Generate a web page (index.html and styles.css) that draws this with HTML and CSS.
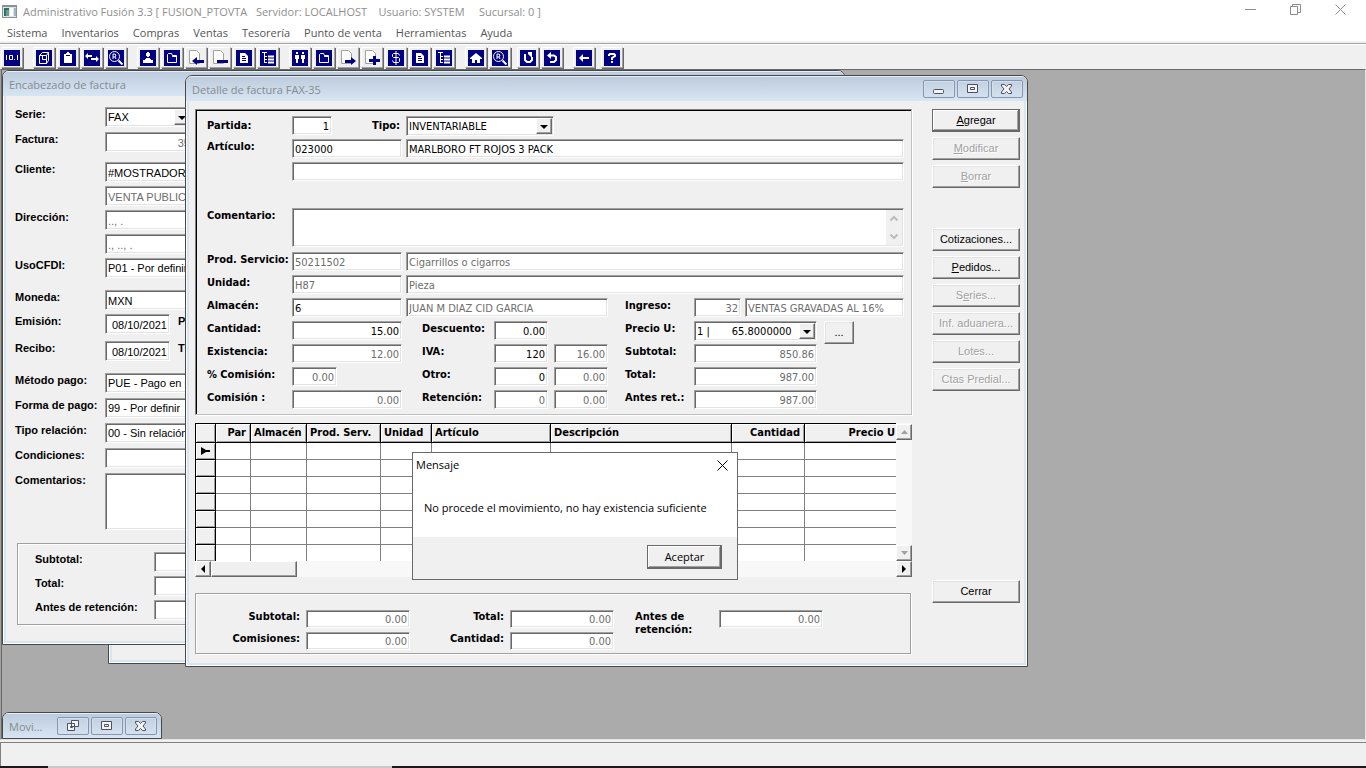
FILE: index.html
```html
<!DOCTYPE html>
<html lang="es">
<head>
    <meta charset="UTF-8">
    <meta name="viewport" content="width=device-width, initial-scale=1.0">
    <title>Administrativo Fusión 3.3</title>
    <link rel="stylesheet" href="styles.css">
</head>
<body>
    <!-- Barra de título -->
    <header class="titlebar">
        <svg class="app-icon" width="15" height="13" viewBox="0 0 15 13"><path fill="#8a9396" d="M0 0h15v13H0z"/><path fill="#dfe5e6" d="M1 2h13v10H1z"/><path fill="#2f6f70" d="M2 3h5v8H2z"/><path fill="#6aa384" d="M4 5h3v6H4z"/><path fill="#fff" d="M8 3h3v8H8z"/><path fill="#9fb4c8" d="M12 3h2v8h-2z"/></svg>
        <h1 class="app-title">Administrativo Fusión 3.3 [ FUSION_PTOVTA &nbsp; Servidor: LOCALHOST &nbsp;&nbsp; Usuario: SYSTEM &nbsp; &nbsp; Sucursal: 0 ]</h1>
        <div class="app-controls">
            <button aria-label="Minimizar"><svg width="11" height="11" viewBox="0 0 11 11"><path d="M0 5.500h11"/></svg></button>
            <button aria-label="Restaurar"><svg width="11" height="11" viewBox="0 0 11 11"><path d="M.5 2.500h7v8h-7zM2.500 2.500v-2h8v8h-3"/></svg></button>
            <button aria-label="Cerrar"><svg width="11" height="11" viewBox="0 0 11 11"><path d="M.5.5l10 10M10.500.5l-10 10"/></svg></button>
        </div>
    </header>

    <nav class="menu">
        <a href="#">Sistema</a>
        <a href="#">Inventarios</a>
        <a href="#">Compras</a>
        <a href="#">Ventas</a>
        <a href="#">Tesorería</a>
        <a href="#">Punto de venta</a>
        <a href="#">Herramientas</a>
        <a href="#">Ayuda</a>
    </nav>

    <!-- Barra de herramientas -->
    <div class="toolbar">
        <div class="tools">
            <button class="tool" aria-label="Numeración"><svg viewBox="0 0 16 16"><path class="w" d="M2.500 5v5M5.500 5.500h3v4h-3zM10.500 9v1M13.500 5v5"/></svg></button>
        </div>
        <div class="tools">
            <button class="tool" aria-label="Artículos"><svg viewBox="0 0 16 16"><path class="w" d="M3.500 5.500h7v8h-7zM3.500 5.500l3-3h6v8l-2 3M10.500 5.500l2-3M6.500 5.500v4h4"/></svg></button>
            <button class="tool" aria-label="Inventario"><svg viewBox="0 0 16 16"><path class="f" d="M4 4h2V3h1V2h2v1h1v1h2v9H4z"/><path class="n" d="M6 5h4v1H6z"/></svg></button>
            <button class="tool" aria-label="Movimientos"><svg viewBox="0 0 16 16"><path class="f" d="M1 6l3-3v2h4v2H4v2zM15 9l-3-3v2H7v2h5v2z"/></svg></button>
            <button class="tool" aria-label="Consulta"><svg viewBox="0 0 16 16"><circle class="w" cx="6.500" cy="6.500" r="5"/><path class="w" d="M5 9V4h2l1 1-1 2H5M7 7l1 2"/><path class="w2" d="M10.500 10.500l4 4"/></svg></button>
        </div>
        <div class="tools">
            <button class="tool" aria-label="Proveedores"><svg viewBox="0 0 16 16"><path class="f" d="M7 2h2v1h1v3H9v1H7V6H6V3h1zM6 8h4v1h1v1h2v3H3v-3h2V9h1z"/></svg></button>
            <button class="tool" aria-label="Abrir compras"><svg viewBox="0 0 16 16"><path class="w" d="M3.500 12.500v-8l1-1h3l1 2h4v7zM8.500 5.500v1h4"/></svg></button>
            <button class="tool plain" aria-label="Entrada"><svg viewBox="0 0 16 16"><path class="page" d="M1.500.5h7l3 3v10h-10z"/><path class="n" d="M4 11l5-4v3h7v3H9v2z"/></svg></button>
            <button class="tool plain" aria-label="Quitar"><svg viewBox="0 0 16 16"><path class="page" d="M1.500.5h7l3 3v10h-10z"/><path class="n" d="M5 10h11v3H5z"/></svg></button>
            <button class="tool" aria-label="Documento de compra"><svg viewBox="0 0 16 16"><path class="f" d="M4 3h5l3 3v7H4z"/><path class="b" d="M6 6.500h3M6 8.500h4M6 10.500h4"/></svg></button>
            <button class="tool" aria-label="Árbol de compras"><svg viewBox="0 0 16 16"><path class="w" d="M2 2.500h5M4.500 3v10M5 6.500h2M5 9.500h2M5 12.500h2"/><path class="w2" d="M8 6.500h6M8 9.500h6M8 12.500h6"/></svg></button>
        </div>
        <div class="tools">
            <button class="tool" aria-label="Clientes"><svg viewBox="0 0 16 16"><path class="f" d="M4 2h2v2H4zM3 5h4v4H6v4H4V9H3zM10 2h2v2h-2zM9 5h4v4h-1v4h-2V9H9z"/></svg></button>
            <button class="tool" aria-label="Abrir ventas"><svg viewBox="0 0 16 16"><path class="w" d="M3.500 12.500v-8l1-1h3l1 2h4v7zM8.500 5.500v1h4"/></svg></button>
            <button class="tool plain" aria-label="Salida"><svg viewBox="0 0 16 16"><path class="page" d="M1.500.5h7l3 3v10h-10z"/><path class="n" d="M16 11l-5-4v3H5v3h6v2z"/></svg></button>
            <button class="tool plain" aria-label="Agregar documento"><svg viewBox="0 0 16 16"><path class="page" d="M1.500.5h7l3 3v10h-10z"/><path class="n" d="M9 6h3v3h4v3h-4v3H9v-3H5V9h4z"/></svg></button>
            <button class="tool" aria-label="Pagos"><svg viewBox="0 0 16 16"><path class="w" d="M11.500 5.500l-1-2h-5l-1 1v2l1 1h5l1 1v3l-1 1h-5l-1-2M8 1v14"/></svg></button>
            <button class="tool" aria-label="Documento de venta"><svg viewBox="0 0 16 16"><path class="f" d="M4 3h5l3 3v7H4z"/><path class="b" d="M6 6.500h3M6 8.500h4M6 10.500h4"/></svg></button>
            <button class="tool" aria-label="Árbol de ventas"><svg viewBox="0 0 16 16"><path class="w" d="M2 2.500h5M4.500 3v10M5 6.500h2M5 9.500h2M5 12.500h2"/><path class="w2" d="M8 6.500h6M8 9.500h6M8 12.500h6"/></svg></button>
        </div>
        <div class="tools">
            <button class="tool" aria-label="Inicio"><svg viewBox="0 0 16 16"><path class="f" d="M8 3l6 5v1h-2v4H9v-3H7v3H4V9H2V8z"/></svg></button>
            <button class="tool" aria-label="Buscar"><svg viewBox="0 0 16 16"><circle class="w" cx="6.500" cy="6.500" r="5"/><path class="w" d="M5 9V4h2l1 1-1 2H5M7 7l1 2"/><path class="w2" d="M10.500 10.500l4 4"/></svg></button>
        </div>
        <div class="tools close">
            <button class="tool" aria-label="Actualizar"><svg viewBox="0 0 16 16"><path class="w2" d="M6 5H5v5l2 2h3l2-2V7"/><path class="f" d="M8 2h4v5h-1L8 4z"/></svg></button>
            <button class="tool" aria-label="Deshacer"><svg viewBox="0 0 16 16"><path class="w2" d="M6 5.500h4l2 1.500v3l-2 2H6"/><path class="f" d="M7 2v7L3 5.500z"/></svg></button>
        </div>
        <div class="tools">
            <button class="tool" aria-label="Salir"><svg viewBox="0 0 16 16"><path class="f" d="M3 8l4-4v3h6v2H7v3z"/></svg></button>
        </div>
        <div class="tools close">
            <button class="tool" aria-label="Ayuda"><svg viewBox="0 0 16 16"><path class="w2" d="M5 6V5l1-1h4l1 1v1L8 8v2M8 11v2"/></svg></button>
        </div>
    </div>

    <!-- Escritorio MDI -->
    <main class="desktop">
        <section class="window win-header">
            <h2 class="win-title">Encabezado de factura</h2>
            <div class="win-body header-form">
                <div class="group">
                    <div class="row"><label for="serie">Serie:</label><span class="combo serie"><select id="serie"><option>FAX</option></select><i></i></span></div>
                    <div class="row"><label for="factura">Factura:</label><input id="factura" class="factura off" value="35"></div>
                </div>
                <div class="group tight">
                    <div class="row"><label for="cliente">Cliente:</label><input id="cliente" value="#MOSTRADOR"></div>
                    <div class="row"><label for="nombre"></label><input id="nombre" class="off" value="VENTA PUBLICO"></div>
                    <div class="row"><label for="dir1">Dirección:</label><input id="dir1" class="off" value=".., ."></div>
                    <div class="row"><label for="dir2"></label><input id="dir2" class="off" value="., .., ."></div>
                    <div class="row"><label for="uso">UsoCFDI:</label><span class="combo"><select id="uso"><option>P01 - Por definir</option></select><i></i></span></div>
                </div>
                <div class="group tight">
                    <div class="row"><label for="moneda">Moneda:</label><input id="moneda" value="MXN"></div>
                    <div class="row"><label for="emision">Emisión:</label><input id="emision" class="date" value="08/10/2021"><label class="next" for="plazo">Plazo:</label><input id="plazo"></div>
                    <div class="row recibo"><label for="recibo">Recibo:</label><input id="recibo" class="date" value="08/10/2021"><label class="next" for="tc">TC:</label><input id="tc"></div>
                </div>
                <div class="group">
                    <div class="row"><label for="metodo">Método pago:</label><span class="combo"><select id="metodo"><option>PUE - Pago en una exhibición</option></select><i></i></span></div>
                    <div class="row"><label for="forma">Forma de pago:</label><span class="combo"><select id="forma"><option>99 - Por definir</option></select><i></i></span></div>
                    <div class="row"><label for="relacion">Tipo relación:</label><span class="combo"><select id="relacion"><option>00 - Sin relación</option></select><i></i></span></div>
                    <div class="row"><label for="cond">Condiciones:</label><input id="cond"></div>
                    <div class="row"><label for="coments">Comentarios:</label><textarea id="coments"></textarea></div>
                </div>
                <div class="etched header-totals">
                    <div class="row"><label for="hsub">Subtotal:</label><input id="hsub"></div>
                    <div class="row"><label for="htot">Total:</label><input id="htot"></div>
                    <div class="row"><label for="hret">Antes de retención:</label><input id="hret"></div>
                </div>
            </div>
        </section>

        <section class="window win-back"></section>

        <section class="window win-detail">
            <div class="win-top">
                <h2 class="win-title">Detalle de factura FAX-35</h2>
                <div class="win-controls">
                    <button aria-label="Minimizar"><svg width="14" height="12" viewBox="0 0 14 12"><rect x="1.500" y="6.500" width="10" height="4" rx="1"/></svg></button>
                    <button aria-label="Maximizar"><svg width="14" height="12" viewBox="0 0 14 12"><path d="M1.500 1.500h10v8h-10zM4.500 4.500h4v2h-4z"/></svg></button>
                    <button aria-label="Cerrar"><svg width="14" height="12" viewBox="0 0 14 12"><path d="M1.500 1.500h3L6.500 3.500l2-2h3v1.500l-2.500 3 2.500 3v1.500h-3l-2-2-2 2h-3V9L4 6 1.500 3z"/></svg></button>
                </div>
            </div>
            <div class="win-body detail">
                <div class="detail-main">
                    <form class="sunken">
                        <div class="line first">
                            <label class="l1" for="partida">Partida:</label><input id="partida" class="w40 num" value="1">
                            <label class="tipo" for="tipo">Tipo:</label><span class="combo w148"><select id="tipo"><option>INVENTARIABLE</option></select><i></i></span>
                        </div>
                        <div class="line">
                            <label class="l1" for="articulo">Artículo:</label><input id="articulo" class="w110" value="023000">
                            <input class="grow" aria-label="Nombre del artículo" value="MARLBORO FT ROJOS 3 PACK">
                        </div>
                        <div class="line">
                            <label class="l1" for="extra"></label><input id="extra" class="grow">
                        </div>
                        <div class="line comment">
                            <label class="l1" for="comentario">Comentario:</label>
                            <div class="memo grow">
                                <textarea id="comentario"></textarea>
                                <div class="memo-scroll">
                                    <svg width="10" height="7" viewBox="0 0 10 7"><path d="M1.500 5.500L5 2l3.500 3.500"/></svg>
                                    <svg width="10" height="7" viewBox="0 0 10 7"><path d="M1.500 1.500L5 5l3.500-3.500"/></svg>
                                </div>
                            </div>
                        </div>
                        <div class="line">
                            <label class="l1" for="prod">Prod. Servicio:</label><input id="prod" class="w110 off" value="50211502">
                            <input class="grow off" aria-label="Descripción del servicio" value="Cigarrillos o cigarros">
                        </div>
                        <div class="line">
                            <label class="l1" for="unidad">Unidad:</label><input id="unidad" class="w110 off" value="H87">
                            <input class="grow off" aria-label="Nombre de la unidad" value="Pieza">
                        </div>
                        <div class="line">
                            <label class="l1" for="almacen">Almacén:</label><input id="almacen" class="w110" value="6">
                            <input class="w202 off" aria-label="Nombre del almacén" value="JUAN M DIAZ CID GARCIA">
                            <label class="l3" for="ingreso">Ingreso:</label><input id="ingreso" class="w47 num off" value="32">
                            <input class="grow off" aria-label="Tipo de ingreso" value="VENTAS GRAVADAS AL 16%">
                        </div>
                        <div class="line">
                            <label class="l1" for="cantidad">Cantidad:</label><input id="cantidad" class="w110 num" value="15.00">
                            <label class="l2" for="descuento">Descuento:</label><input id="descuento" class="w54 num" value="0.00">
                            <span class="w54 second"></span>
                            <label class="l3" for="precio">Precio U:</label><span class="combo w123"><select id="precio"><option>1 | &nbsp; &nbsp; &nbsp; 65.8000000</option></select><i></i></span>
                            <button type="button" class="btn dots">...</button>
                        </div>
                        <div class="line">
                            <label class="l1" for="existencia">Existencia:</label><input id="existencia" class="w110 num off" value="12.00">
                            <label class="l2" for="iva">IVA:</label><input id="iva" class="w54 num" value="120">
                            <input class="w54 second num off" aria-label="IVA %" value="16.00">
                            <label class="l3" for="subtotal">Subtotal:</label><input id="subtotal" class="w123 num off" value="850.86">
                        </div>
                        <div class="line">
                            <label class="l1" for="pcom">% Comisión:</label><span class="w110"><input id="pcom" class="w45 num off" value="0.00"></span>
                            <label class="l2" for="otro">Otro:</label><input id="otro" class="w54 num" value="0">
                            <input class="w54 second num off" aria-label="Otro %" value="0.00">
                            <label class="l3" for="total">Total:</label><input id="total" class="w123 num off" value="987.00">
                        </div>
                        <div class="line">
                            <label class="l1" for="comision">Comisión :</label><input id="comision" class="w110 num off" value="0.00">
                            <label class="l2" for="ret">Retención:</label><input id="ret" class="w54 num off" value="0">
                            <input class="w54 second num off" aria-label="Retención %" value="0.00">
                            <label class="l3" for="antes">Antes ret.:</label><input id="antes" class="w123 num off" value="987.00">
                        </div>
                    </form>

                    <!-- Rejilla de partidas -->
                    <div class="grid">
                        <div class="grid-view">
                            <table>
                                <colgroup><col class="c-sel"><col class="c-par"><col class="c-alm"><col class="c-prod"><col class="c-uni"><col class="c-art"><col class="c-desc"><col class="c-cant"><col class="c-precio"></colgroup>
                                <thead>
                                    <tr><th></th><th class="r">Par</th><th>Almacén</th><th>Prod. Serv.</th><th>Unidad</th><th>Artículo</th><th>Descripción</th><th class="r">Cantidad</th><th class="r">Precio U</th></tr>
                                </thead>
                                <tbody>
                                    <tr><th><svg width="9" height="8" viewBox="0 0 9 8"><path d="M0 0l5 3h4v2H5L0 8z"/></svg></th><td></td><td></td><td></td><td></td><td></td><td></td><td></td><td></td></tr>
                                    <tr><th></th><td></td><td></td><td></td><td></td><td></td><td></td><td></td><td></td></tr>
                                    <tr><th></th><td></td><td></td><td></td><td></td><td></td><td></td><td></td><td></td></tr>
                                    <tr><th></th><td></td><td></td><td></td><td></td><td></td><td></td><td></td><td></td></tr>
                                    <tr><th></th><td></td><td></td><td></td><td></td><td></td><td></td><td></td><td></td></tr>
                                    <tr><th></th><td></td><td></td><td></td><td></td><td></td><td></td><td></td><td></td></tr>
                                    <tr><th></th><td></td><td></td><td></td><td></td><td></td><td></td><td></td><td></td></tr>
                                </tbody>
                            </table>
                        </div>
                        <div class="vscroll">
                            <button class="sb" aria-label="Subir"><svg width="7" height="4" viewBox="0 0 7 4"><path fill="#a0a0a0" d="M0 4l3.500-4L7 4z"/></svg></button>
                            <button class="sb" aria-label="Bajar"><svg width="7" height="4" viewBox="0 0 7 4"><path fill="#a0a0a0" d="M0 0l3.500 4L7 0z"/></svg></button>
                        </div>
                        <div class="hscroll">
                            <button class="sb" aria-label="Izquierda"><svg width="4" height="8" viewBox="0 0 4 8"><path d="M4 0L0 4l4 4z"/></svg></button>
                            <div class="thumb"></div>
                            <button class="sb" aria-label="Derecha"><svg width="4" height="8" viewBox="0 0 4 8"><path d="M0 0l4 4-4 4z"/></svg></button>
                        </div>
                    </div>

                    <div class="etched sums">
                        <label for="ssub">Subtotal:</label><input id="ssub" class="num off" value="0.00">
                        <label for="stot">Total:</label><input id="stot" class="num off" value="0.00">
                        <label class="two" for="sret">Antes de retención:</label><input id="sret" class="num off" value="0.00">
                        <label for="scom">Comisiones:</label><input id="scom" class="num off" value="0.00">
                        <label for="scan">Cantidad:</label><input id="scan" class="num off" value="0.00">
                    </div>
                </div>

                <div class="actions">
                    <button class="btn default"><u>A</u>gregar</button>
                    <button class="btn" disabled><u>M</u>odificar</button>
                    <button class="btn" disabled><u>B</u>orrar</button>
                    <button class="btn apart">Cotizaciones...</button>
                    <button class="btn"><u>P</u>edidos...</button>
                    <button class="btn" disabled>S<u>e</u>ries...</button>
                    <button class="btn" disabled>Inf. aduanera...</button>
                    <button class="btn" disabled>Lotes...</button>
                    <button class="btn" disabled>Ctas Predial...</button>
                    <button class="btn cerrar">Cerrar</button>
                </div>
            </div>
        </section>

        <!-- Ventana minimizada -->
        <section class="window win-min">
            <div class="win-top">
                <h2 class="win-title">Movi...</h2>
                <div class="win-controls">
                    <button aria-label="Restaurar"><svg width="14" height="12" viewBox="0 0 14 12"><path d="M5.500.5h7v6h-7zM1.500 3.500h7v7h-7zM4.500 6.500h2v1h-2z"/></svg></button>
                    <button aria-label="Maximizar"><svg width="14" height="12" viewBox="0 0 14 12"><path d="M1.500 1.500h10v8h-10zM4.500 4.500h4v2h-4z"/></svg></button>
                    <button aria-label="Cerrar"><svg width="14" height="12" viewBox="0 0 14 12"><path d="M1.500 1.500h3L6.500 3.500l2-2h3v1.500l-2.500 3 2.500 3v1.500h-3l-2-2-2 2h-3V9L4 6 1.500 3z"/></svg></button>
                </div>
            </div>
        </section>

        <!-- Mensaje -->
        <div class="dialog" role="alertdialog">
            <div class="dialog-top">
                <span>Mensaje</span>
                <button aria-label="Cerrar"><svg width="11" height="11" viewBox="0 0 11 11"><path d="M.5.5l10 10M10.500.5l-10 10"/></svg></button>
            </div>
            <p>No procede el movimiento, no hay existencia suficiente</p>
            <div class="dialog-foot"><button class="btn default">Aceptar</button></div>
        </div>
    </main>

    <footer class="status"></footer>
    <div class="strip"></div>
</body>
</html>
```
FILE: styles.css
```css
* {
    margin: 0;
    padding: 0;
    box-sizing: border-box;
}

body {
    display: flex;
    flex-direction: column;
    height: 100vh;
    overflow: hidden;
    background: #f0f0f0;
    font: 11px/15px "DejaVu Sans Condensed", "DejaVu Sans", sans-serif;
    color: #000;
}

button, input, select, textarea {
    font: inherit;
    color: inherit;
    border-radius: 0;
}

/* Barra de título */
.titlebar {
    display: flex;
    align-items: center;
    height: 23px;
    padding-left: 2px;
    background: #fff;
}

.app-icon {
    margin-right: 6px;
}

.app-title {
    flex: 1;
    font: 11px/16px "Open Sans", "Noto Sans", sans-serif;
    color: #8f8f8f;
}

.app-controls {
    display: flex;
    padding-right: 3px;
}

.app-controls button {
    width: 45px;
    height: 20px;
    border: none;
    background: none;
}

.app-controls path,
.dialog-top path {
    fill: none;
    stroke: #8c8c8c;
}

.dialog-top path {
    stroke: #000;
}

.menu {
    display: flex;
    gap: 14px;
    height: 20px;
    padding-left: 7px;
    background: #fff;
    border-bottom: 2px solid #f0f0f0;
    font: 11px/20px "Open Sans", "Noto Sans", sans-serif;
}

.menu a {
    color: #555;
    text-decoration: none;
}

/* Herramientas */
.toolbar {
    display: flex;
    gap: 10px;
    height: 26px;
    padding: 3px 1px 0;
    border-top: 1px solid #a0a0a0;
    box-shadow: inset 0 1px #fff;
}

.tools {
    display: flex;
    gap: 2px;
}

.tools.close {
    margin-left: -4px;
}

.tool {
    display: flex;
    width: 22px;
    height: 21px;
    padding: 2px 0 0 2px;
    background: #f0f0f0;
    border: 1px solid;
    border-color: #fff #a0a0a0 #a0a0a0 #fff;
    box-shadow: 1px 1px #696969;
}

.tool svg {
    width: 16px;
    height: 16px;
    background: #000080;
}

.tool.plain svg {
    background: #f0f0f0;
}

.tool .w, .tool .w2 {
    fill: none;
    stroke: #fff;
}

.tool .w2 {
    stroke-width: 2;
}

.tool .f {
    fill: #fff;
}

.tool .n {
    fill: #000080;
}

.tool .b {
    stroke: #000080;
}

.tool .page {
    fill: #fff;
    stroke: #a0a0a0;
}

/* Escritorio */
.desktop {
    position: relative;
    z-index: 0;
    flex: 1;
    overflow: hidden;
    background: #ababab;
    border: 1px solid;
    border-color: #696969 #e3e3e3 #e3e3e3 #a0a0a0;
    box-shadow: inset 1px 0 #696969;
}

.status {
    height: 24px;
    margin-top: 2px;
    border-top: 1px solid #808080;
    border-left: 1px solid #808080;
}

.strip {
    height: 2px;
    background: linear-gradient(90deg, #1c1718 48px, #c8c8c8 48px, #c8c8c8 392px, #1c1718 392px);
}

/* Ventanas */
.window {
    position: absolute;
    width: 843px;
    background: #f0f0f0;
    border: 1px solid #484848;
    border-radius: 7px 7px 0 0;
    box-shadow: inset 0 0 0 1px #fff, inset 0 0 0 3px #d7e4f2;
    overflow: hidden;
}

.win-header {
    left: 1px;
    top: 0;
}

.win-back {
    left: 107px;
    top: 300px;
    width: 300px;
    height: 294px;
    z-index: -1;
}

.win-detail {
    left: 184px;
    top: 5px;
}

.win-min {
    left: 1px;
    bottom: 0;
    width: 160px;
}

.win-top {
    display: flex;
    align-items: center;
    padding-right: 4px;
}

.win-top, .win-header > .win-title {
    background: linear-gradient(#bccbdc, #d8e5f3);
    box-shadow: inset 0 1px #e6eef6;
}

.win-title {
    flex: 1;
    height: 25px;
    padding-left: 6px;
    font: 11px/28px "Open Sans", "Noto Sans", sans-serif;
    color: #858b91;
}

.win-controls {
    display: flex;
    gap: 2px;
}

.win-controls button {
    display: flex;
    align-items: center;
    justify-content: center;
    width: 32px;
    height: 18px;
    background: none;
    border: 1px solid #8796b0;
    border-radius: 2px;
    box-shadow: inset 0 0 0 1px #d3dfec;
}

.win-controls path, .win-controls rect {
    fill: #f4f4f4;
    stroke: #4b5162;
}

/* Controles */
input, textarea, .combo, .memo {
    height: 19px;
    background: #fff;
    border: 1px solid;
    border-color: #a0a0a0 #fff #fff #a0a0a0;
    box-shadow: inset 1px 1px #696969, inset -1px -1px #e3e3e3;
    border-radius: 0;
    outline: none;
    min-width: 0;
}

input {
    padding: 2px 2px 0;
}

textarea {
    resize: none;
}

label {
    font-weight: bold;
}

.num {
    text-align: right;
}

.off {
    color: #6d6d6d;
}

.combo {
    position: relative;
    display: flex;
    height: 20px;
}

.combo select {
    appearance: none;
    width: 100%;
    border: none;
    background: none;
    outline: none;
    padding-left: 2px;
}

.combo i {
    position: absolute;
    right: 1px;
    top: 1px;
    bottom: 1px;
    width: 16px;
    background: #f0f0f0;
    border: 1px solid;
    border-color: #fff #696969 #696969 #fff;
    box-shadow: inset -1px -1px #a0a0a0;
    pointer-events: none;
}

.combo i::after {
    content: "";
    position: absolute;
    left: 3px;
    top: 6px;
    border: 4px solid transparent;
    border-top-color: #000;
    border-bottom: none;
}

.btn {
    height: 23px;
    background: #f0f0f0;
    border: 1px solid;
    border-color: #fff #696969 #696969 #fff;
    box-shadow: inset -1px -1px #a0a0a0, inset 1px 1px #e3e3e3;
    font: 11px/15px "Liberation Sans", Arial, sans-serif;
}

.btn:disabled {
    color: #a0a0a0;
    text-shadow: 1px 1px #fff;
}

.btn.default {
    border-color: #696969;
    box-shadow: inset -1px -1px #696969, inset 1px 1px #fff, inset -2px -2px #a0a0a0;
}

.etched {
    border: 1px solid #a0a0a0;
    box-shadow: 1px 1px #fff, inset 1px 1px #fff;
}

/* Encabezado de factura */
.header-form {
    padding: 11px 20px 19px 12px;
    font: 11px/15px "Liberation Sans", Arial, sans-serif;
}

.header-form .group {
    display: flex;
    flex-direction: column;
    gap: 5px;
    margin-bottom: 12px;
}

.header-form .group:first-child {
    margin-bottom: 10px;
}

.header-form .group.tight {
    gap: 4px;
}

.header-form .row {
    display: flex;
}

.header-form .row label {
    width: 90px;
    white-space: nowrap;
}

.header-form .row input,
.header-form .row .combo {
    width: 180px;
    height: 20px;
}

.header-form .row .combo.serie {
    width: 87px;
}

.header-form .row textarea {
    width: 300px;
    height: 57px;
}

.header-form .row .factura {
    width: 88px;
    text-align: right;
}

.header-form .row .date {
    width: 65px;
    text-align: right;
}

.header-form .row .next {
    padding-left: 8px;
}

.header-form .recibo {
    margin-top: 3px;
}

.header-form .header-totals {
    display: flex;
    flex-direction: column;
    gap: 4px;
    margin: 13px 0 0 2px;
    padding: 8px 17px 4px;
}

.header-form .header-totals .row label {
    width: 119px;
}

/* Detalle de factura */
.detail {
    display: flex;
    gap: 20px;
    padding: 8px 7px 12px 9px;
}

.detail-main {
    flex: 1;
    min-width: 0;
}

.sunken {
    display: flex;
    flex-direction: column;
    gap: 4px;
    padding: 6px 7px 5px 11px;
    border: 1px solid;
    border-color: #808080 #c0c0c0 #c0c0c0 #808080;
    box-shadow: 1px 1px #fff, inset 1px 1px #000;
}

.line {
    display: flex;
    gap: 4px;
    height: 19px;
}

.line label {
    white-space: nowrap;
}

.line.first label {
    line-height: 19px;
}

.line .l1 {
    width: 85px;
    margin-right: -4px;
}

.line .l2 {
    width: 68px;
    margin-left: 16px;
}

.line .l3 {
    width: 65px;
    margin-left: 13px;
}

.line .second {
    margin-left: 2px;
}

.line .tipo {
    margin-left: 36px;
    width: 30px;
}

.line.comment {
    height: 39px;
    margin-top: 23px;
    margin-bottom: 1px;
}

.grow { flex: 1; }
.w40 { width: 40px; }
.w45 { width: 45px; }
.w47 { width: 47px; }
.w54 { width: 54px; }
.w110 { width: 110px; }
.w123 { width: 123px; }
.w148 { width: 148px; }
.w202 { width: 202px; }

.dots {
    width: 30px;
    margin-left: 3px;
}

.memo {
    display: flex;
    height: 39px;
    padding: 1px;
}

.memo textarea {
    flex: 1;
    height: 100%;
    border: none;
    box-shadow: none;
}

.memo-scroll {
    display: flex;
    flex-direction: column;
    justify-content: space-around;
    align-items: center;
    width: 16px;
    background: #f0f0f0;
}

.memo-scroll path {
    fill: none;
    stroke: #bcbcbc;
    stroke-width: 2;
}

/* Rejilla */
.grid {
    display: grid;
    grid-template-columns: 1fr 16px;
    margin-top: 8px;
}

.grid-view {
    height: 138px;
    overflow: hidden;
    background: #fff;
    border-left: 1px solid #000;
}

.grid table {
    width: 701px;
    table-layout: fixed;
    border-collapse: separate;
    border-spacing: 0;
}

.c-sel { width: 20px; }
.c-par { width: 35px; }
.c-alm { width: 56px; }
.c-prod { width: 74px; }
.c-uni { width: 51px; }
.c-art { width: 119px; }
.c-desc { width: 181px; }
.c-cant { width: 73px; }
.c-precio { width: 92px; }

.grid th {
    height: 17px;
    background: #f0f0f0;
    border-right: 1px solid #000;
    border-bottom: 1px solid #000;
    box-shadow: inset 1px 1px #fff, inset -1px -1px #a0a0a0;
    text-align: left;
    line-height: 14px;
    white-space: nowrap;
}

.grid thead th {
    height: 20px;
    padding-left: 3px;
    border-top: 1px solid #000;
}

.grid thead .r {
    text-align: right;
    padding-right: 4px;
}

.grid thead th:last-child {
    border-right: none;
    padding-right: 2px;
}

.grid tbody svg {
    display: block;
    margin: 0 5px;
}

.grid td {
    border-right: 1px solid #808080;
    border-bottom: 1px solid #808080;
}

.grid td:last-child {
    border-right: none;
}

.vscroll, .hscroll {
    display: flex;
    background: #f8f8f8;
}

.vscroll {
    flex-direction: column;
    justify-content: space-between;
    padding-top: 1px;
}

.hscroll {
    grid-column: 1 / 3;
}

.hscroll .sb:last-child {
    margin-left: auto;
}

.sb, .thumb {
    width: 16px;
    height: 16px;
    background: #f0f0f0;
    border: 1px solid;
    border-color: #fff #696969 #696969 #fff;
    box-shadow: inset -1px -1px #a0a0a0;
}

.thumb {
    width: 86px;
}

.sb svg {
    display: block;
    margin: 0 auto;
}

/* Totales */
.sums {
    display: grid;
    grid-template-columns: 104px 104px 88px 104px 93px 104px;
    grid-template-rows: 18px 18px;
    column-gap: 6px;
    row-gap: 4px;
    margin: 16px 1px 0 0;
    padding: 16px 0 3px;
}

.sums input {
    height: 18px;
    padding-top: 1px;
}

.sums label {
    text-align: right;
    line-height: 14px;
}

.sums .two {
    grid-row: span 2;
    padding-left: 15px;
    text-align: left;
    line-height: 13px;
}

/* Botones laterales */
.actions {
    display: flex;
    flex-direction: column;
    gap: 5px;
    width: 88px;
}

.actions .apart {
    margin-top: 35px;
}

.actions .cerrar {
    margin-top: auto;
    margin-bottom: 51px;
}

/* Mensaje */
.dialog {
    position: absolute;
    left: 411px;
    top: 382px;
    width: 326px;
    background: #fff;
    border: 1px solid #696969;
    font: 11px/15px "Open Sans", "Noto Sans", sans-serif;
}

.dialog-top {
    display: flex;
    align-items: center;
    justify-content: space-between;
    padding: 3px 8px 3px 3px;
    line-height: 18px;
}

.dialog-top button {
    display: flex;
    padding: 1px;
    border: none;
    background: none;
}

.dialog p {
    padding: 23px 11px 22px;
}

.dialog-foot {
    display: flex;
    justify-content: flex-end;
    padding: 8px 15px 10px;
    background: #f0f0f0;
}

.dialog .btn {
    width: 75px;
    height: 24px;
    padding-bottom: 2px;
    font: inherit;
}
```
